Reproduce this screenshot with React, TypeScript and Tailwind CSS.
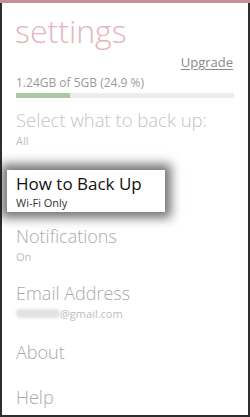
import React from "react";

const font = { fontFamily: '"Open Sans", "Noto Sans", sans-serif' };

function Item({ title, sub, light }: { title: string; sub?: React.ReactNode; light?: boolean }) {
  return (
    <div className="px-[14px]">
      <div className={`leading-[22px] font-light ${light ? "text-[18.5px] text-[#c4c4c4]" : "text-[18px] text-[#a9a9a9]"}`}>{title}</div>
      {sub && <div className="text-[11px] leading-[13px] mt-[3px] text-[#bdbdbd]">{sub}</div>}
    </div>
  );
}

export default function App() {
  return (
    <div className="w-[250px] h-[417px] bg-white overflow-hidden flex flex-col" style={font}>
      <div className="h-[3px] bg-[#c98f99] shrink-0" />
      <div className="flex-1 flex flex-col border-x-2 border-b-2 border-[#2e2e2e] relative">
        <div className="px-[13px] mt-[12px] text-[32px] leading-[32px] font-light text-[#e3b4bb]">settings</div>

        <div className="flex justify-end px-[15px] mt-[7px]">
          <span className="text-[13px] leading-[16px] text-[#8a8a8a] underline underline-offset-2">Upgrade</span>
        </div>

        <div className="px-[14px] mt-[6px] text-[12px] leading-[14px] text-[#9a9a9a]">1.24GB of 5GB (24.9 %)</div>
        <div className="mx-[14px] mt-[3px] h-[5px] bg-[#ececec] flex">
          <div className="h-full bg-[#a9c9a3]" style={{ width: "24.9%" }} />
        </div>

        <div className="mt-[11px]">
          <Item title="Select what to back up:" sub="All" light />
        </div>

        <div className="mt-[23px] mx-[5px] w-[158px] h-[42px] bg-white shadow-[0_0_10px_6px_rgba(0,0,0,0.55)] px-[9px] pt-[3px]">
          <div className="text-[17px] leading-[22px] text-[#111]">How to Back Up</div>
          <div className="text-[11px] leading-[13px] mt-[1px] text-[#333]">Wi-Fi Only</div>
        </div>

        <div className="mt-[13px]">
          <Item title="Notifications" sub="On" />
        </div>
        <div className="mt-[19px]">
          <Item
            title="Email Address"
            sub={
              <span className="flex items-center">
                <span className="inline-block w-[44px] h-[9px] bg-[#e2e2e2] blur-[1.5px] rounded-sm" />
                <span>@gmail.com</span>
              </span>
            }
          />
        </div>
        <div className="mt-[21px]">
          <Item title="About" />
        </div>
        <div className="mt-[23px]">
          <Item title="Help" />
        </div>
      </div>
    </div>
  );
}
